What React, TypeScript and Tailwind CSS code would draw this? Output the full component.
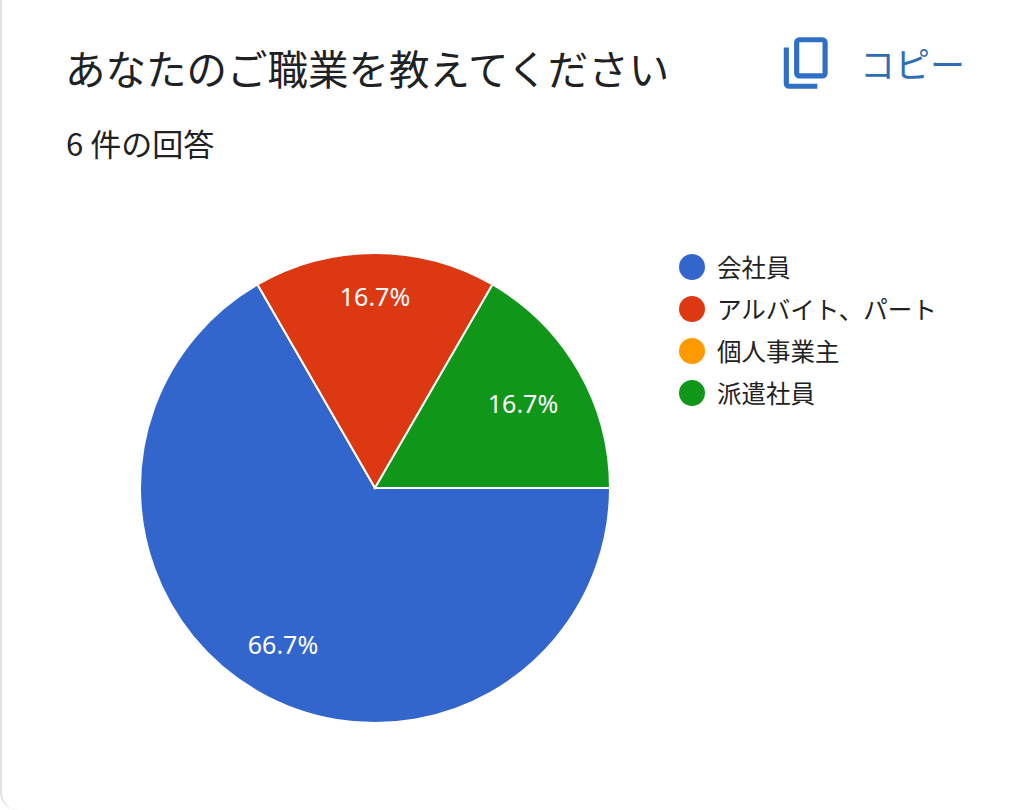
const slices = [
  { label: "会社員", color: "#3366cc" },
  { label: "アルバイト、パート", color: "#dc3912" },
  { label: "個人事業主", color: "#ff9900" },
  { label: "派遣社員", color: "#109618" },
];

const CopyIcon = () => (
  <svg width="62" height="62" viewBox="0 -960 960 960" fill="#2f6fc6">
    <path d="M360-240q-33 0-56.5-23.5T280-320v-480q0-33 23.5-56.5T360-880h360q33 0 56.5 23.5T800-800v480q0 33-23.5 56.5T720-240H360Zm0-80h360v-480H360v480ZM200-80q-33 0-56.5-23.5T120-160v-560h80v560h440v80H200Z" />
  </svg>
);

const PieChart = () => (
  <svg width="480" height="480" viewBox="0 0 480 480" className="shrink-0">
    {/* 会社員 66.7% */}
    <path d="M240 240 L475 240 A235 235 0 1 1 122.5 36.5 Z" fill="#3366cc" stroke="#fff" strokeWidth="2" />
    {/* アルバイト 16.7% */}
    <path d="M240 240 L122.5 36.5 A235 235 0 0 1 357.5 36.5 Z" fill="#dc3912" stroke="#fff" strokeWidth="2" />
    {/* 派遣社員 16.7% */}
    <path d="M240 240 L357.5 36.5 A235 235 0 0 1 475 240 Z" fill="#109618" stroke="#fff" strokeWidth="2" />
    <g fill="#fff" fontSize="25" fontFamily="'Noto Sans', Roboto, sans-serif" textAnchor="middle" dominantBaseline="central">
      <text x="240" y="48">16.7%</text>
      <text x="388" y="155">16.7%</text>
      <text x="148" y="396">66.7%</text>
    </g>
  </svg>
);

const App = () => {
  return (
    <div
      className="w-[1022px] h-[810px] bg-white border-l-2 border-[#e2e2e2] rounded-bl-[18px] overflow-hidden"
      style={{ fontFamily: "'Noto Sans CJK JP', 'Noto Sans', sans-serif" }}
    >
      <div className="flex justify-between items-start pl-[63px] pr-[57px]">
        <h1 className="mt-[44px] text-[40.5px] leading-[48px] font-normal text-[#202124]">
          あなたのご職業を教えてください
        </h1>
        <button className="flex items-center gap-[22px] mt-[32px]">
          <CopyIcon />
          <span className="text-[35px] leading-[62px] text-[#2f6db8]">コピー</span>
        </button>
      </div>

      <p className="pl-[64px] mt-[30px] text-[31px] leading-[37px] text-[#202124]">6 件の回答</p>

      <div className="flex items-start mt-[85px] pl-[133px]">
        <div className="mt-[2px]">
          <PieChart />
        </div>
        <ul className="ml-[64px] flex flex-col">
          {slices.map((s) => (
            <li key={s.label} className="flex items-center h-[42px] gap-[12px]">
              <span className="w-[26px] h-[26px] rounded-full shrink-0" style={{ backgroundColor: s.color }} />
              <span className="text-[24.5px] leading-[30px] text-[#222222]">{s.label}</span>
            </li>
          ))}
        </ul>
      </div>
    </div>
  );
};

export default App;
